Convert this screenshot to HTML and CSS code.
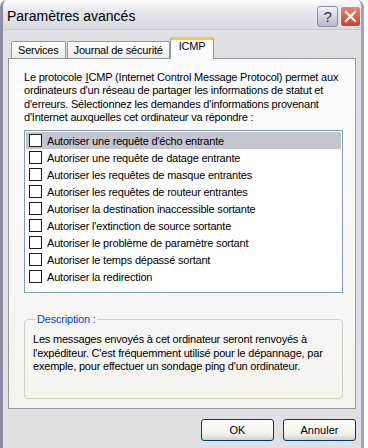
FILE: index.html
```html
<!DOCTYPE html>
<html>
<head>
  <title>Paramètres avancés</title>
  <link rel="stylesheet" href="styles.css">
</head>
<body>
  <div class="window">
    <header class="titlebar">
      <span class="title">Paramètres avancés</span>
      <div class="controls">
        <span class="ctl help">?</span>
        <span class="ctl close">
          <svg width="13" height="13" viewBox="0 0 13 13"><path d="M2 2 L11 11 M11 2 L2 11" stroke="#fff" stroke-width="2.2" stroke-linecap="square"/></svg>
        </span>
      </div>
    </header>
    <main class="body">
      <div class="tabs">
        <span class="tab">Services</span>
        <span class="tab">Journal de sécurité</span>
        <span class="tab active">ICMP</span>
      </div>
      <section class="panel">
        <p class="intro">Le protocole <span class="key">I</span>CMP (Internet Control Message Protocol) permet aux ordinateurs d'un réseau de partager les informations de statut et d'erreurs. Sélectionnez les demandes d'informations provenant d'Internet auxquelles cet ordinateur va répondre :</p>
        <ul class="list">
          <li class="selected"><span class="check"></span>Autoriser une requête d'écho entrante</li>
          <li><span class="check"></span>Autoriser une requête de datage entrante</li>
          <li><span class="check"></span>Autoriser les requêtes de masque entrantes</li>
          <li><span class="check"></span>Autoriser les requêtes de routeur entrantes</li>
          <li><span class="check"></span>Autoriser la destination inaccessible sortante</li>
          <li><span class="check"></span>Autoriser l'extinction de source sortante</li>
          <li><span class="check"></span>Autoriser le problème de paramètre sortant</li>
          <li><span class="check"></span>Autoriser le temps dépassé sortant</li>
          <li><span class="check"></span>Autoriser la redirection</li>
        </ul>
        <fieldset class="group">
          <legend>Description :</legend>
          <p>Les messages envoyés à cet ordinateur seront renvoyés à l'expéditeur. C'est fréquemment utilisé pour le dépannage, par exemple, pour effectuer un sondage ping d'un ordinateur.</p>
        </fieldset>
      </section>
      <div class="buttons">
        <button type="button">OK</button>
        <button type="button">Annuler</button>
      </div>
    </main>
  </div>
</body>
</html>
```

FILE: styles.css
```css
body {
  margin: 0;
  background-color: #ffffff;
  font-family: "Liberation Sans", Arial, sans-serif;
  font-size: 11px;
  letter-spacing: -0.2px;
  color: #000000;
}

.window {
  width: 364px;
  height: 448px;
  box-sizing: border-box;
  border-left: 3px solid #8d8da4;
  border-right: 3px solid #a4a4b8;
  border-radius: 7px 7px 0 0;
  background-color: #e0dfe3;
  overflow: hidden;
}

.titlebar {
  height: 30px;
  display: flex;
  justify-content: space-between;
  align-items: center;
  padding: 0 0 0 4px;
  background: linear-gradient(#fdfdfe, #e6e6ec 40%, #d9d9e1);
  border-bottom: 1px solid #c8c8d4;
  box-sizing: border-box;
}

.title {
  font-size: 14px;
  letter-spacing: 0;
  color: #000000;
  padding-top: 2px;
}

.controls {
  display: flex;
  gap: 2px;
  padding-top: 4px;
}

.ctl {
  width: 21px;
  height: 21px;
  box-sizing: border-box;
  border: 1px solid #ffffff;
  border-radius: 3px;
  display: flex;
  align-items: center;
  justify-content: center;
}

.help {
  background: linear-gradient(#f2f2f6, #b8b8c8);
  border-color: #8e8ea6;
  font-size: 15px;
  color: #33334a;
}

.close {
  background: linear-gradient(#e8866e, #c9422e);
  border-color: #fff0ec;
}

.body {
  padding: 7px 5px 0 5px;
}

.tabs {
  display: flex;
  align-items: flex-end;
  height: 21px;
  padding-left: 3px;
  position: relative;
  z-index: 1;
}

.tab {
  height: 17px;
  box-sizing: border-box;
  padding: 2px 6px 0 6px;
  border: 1px solid #919b9c;
  border-bottom: none;
  border-radius: 2px 2px 0 0;
  background: linear-gradient(#ffffff, #ecebe6);
  margin-right: 1px;
}

.tab.active {
  height: 22px;
  padding: 0 8px 0 8px;
  margin-left: -1px;
  margin-bottom: -1px;
  border-top: 3px solid #ffc83c;
  background: #fcfcfe;
}

.panel {
  height: 351px;
  box-sizing: border-box;
  border: 1px solid #919b9c;
  background: linear-gradient(#fcfcfe, #f4f3ee);
  padding: 12px 12px 0 15px;
}

.intro {
  margin: 0;
  line-height: 13.3px;
}

.key {
  text-decoration: underline;
  letter-spacing: 0;
  margin-left: 0.5px;
}

.list {
  list-style: none;
  margin: 6px 0 0 0;
  padding: 1px 1px 0 1px;
  height: 163px;
  box-sizing: border-box;
  background-color: #ffffff;
  border: 1px solid #7f9db9;
}

.list li {
  height: 17px;
  display: flex;
  align-items: center;
}

.list li.selected {
  background-color: #c5c5cf;
}

.check {
  width: 13px;
  height: 13px;
  box-sizing: border-box;
  border: 1px solid #1c1c1c;
  background-color: #ffffff;
  margin: 0 5px 0 3px;
}

.group {
  margin: 20px 0 0 0;
  height: 86px;
  box-sizing: border-box;
  border: 1px solid #d0d0bf;
  border-radius: 4px;
  padding: 8px 8px 0 8px;
}

.group legend {
  color: #0046d5;
  padding: 0 1px;
  margin-left: 3px;
}

.group p {
  margin: 0;
  line-height: 13.5px;
}

.buttons {
  display: flex;
  justify-content: flex-end;
  gap: 9px;
  margin-top: 10px;
}

button {
  width: 73px;
  height: 22px;
  border: 1px solid #003c74;
  border-radius: 3px;
  background: linear-gradient(#ffffff, #f0f0ea 70%, #d6d0c5);
  font-family: "Liberation Sans", Arial, sans-serif;
  font-size: 11px;
  color: #000000;
  padding: 0;
}
```
